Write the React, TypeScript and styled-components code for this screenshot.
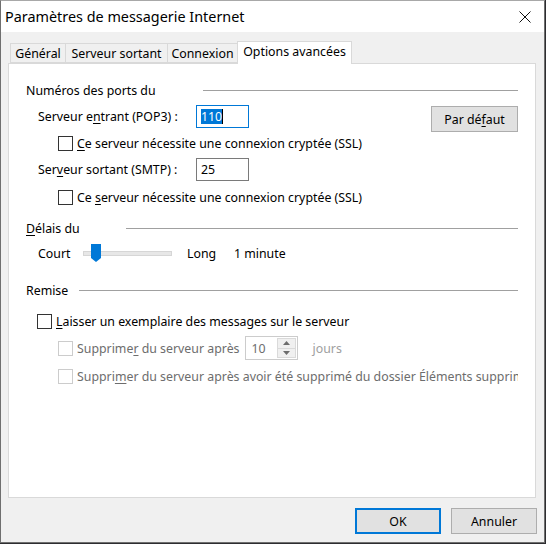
import React from 'react';
import styled, { createGlobalStyle } from 'styled-components';

const GlobalStyle = createGlobalStyle`
  html, body {
    margin: 0;
    padding: 0;
    background: #2d2d30;
  }
  body {
    font-family: 'Noto Sans', 'Liberation Sans', sans-serif;
    font-size: 12.35px;
    color: #000;
  }
  u {
    text-decoration-thickness: 1px;
    text-underline-offset: 2px;
  }
`;

const Window = styled.div`
  width: 545px;
  height: 543px;
  box-sizing: border-box;
  border: 1px solid #6f6f6f;
  border-top-color: #a8a8a8;
  background: #f0f0f0;
  display: flex;
  flex-direction: column;
`;

const TitleBar = styled.div`
  height: 31px;
  flex-shrink: 0;
  background: #fff;
  display: flex;
  align-items: center;
  justify-content: space-between;
  padding: 0 13px 0 4px;
  font-size: 14.4px;
`;

const CloseIcon = styled.svg`
  width: 12px;
  height: 12px;
`;

const Body = styled.div`
  flex: 1;
  display: flex;
  flex-direction: column;
  padding: 0 8px 0 7px;
  min-height: 0;
`;

const TabStrip = styled.div`
  margin-top: 9px;
  height: 22px;
  padding-left: 2px;
  display: flex;
  align-items: flex-end;
  position: relative;
  z-index: 1;
`;

const Tab = styled.div<{ $w: number; $active?: boolean }>`
  width: ${(p) => p.$w}px;
  height: ${(p) => (p.$active ? 23 : 20)}px;
  box-sizing: border-box;
  margin-left: -1px;
  margin-bottom: ${(p) => (p.$active ? -1 : 0)}px;
  border: 1px solid #d9d9d9;
  border-bottom: ${(p) => (p.$active ? 'none' : '1px solid #d9d9d9')};
  background: ${(p) => (p.$active ? '#fff' : '#f0f0f0')};
  display: flex;
  align-items: center;
  justify-content: center;
  padding-bottom: ${(p) => (p.$active ? 3 : 0)}px;
  white-space: nowrap;
  &:first-child {
    margin-left: 0;
  }
`;

const Panel = styled.div`
  flex: 1;
  background: #fff;
  border: 1px solid #d9d9d9;
  padding: 18px 17px 0 17px;
  display: flex;
  flex-direction: column;
  min-height: 0;
  overflow: hidden;
`;

const GroupHeader = styled.div<{ $mt: number; $labelW: number }>`
  margin-top: ${(p) => p.$mt}px;
  height: 16px;
  display: flex;
  align-items: center;
  & > span {
    width: ${(p) => p.$labelW}px;
    flex-shrink: 0;
    white-space: nowrap;
  }
  &::after {
    content: '';
    flex: 1;
    height: 1px;
    background: #a0a0a0;
  }
`;

const Row = styled.div<{ $mt: number; $indent: number; $h?: number }>`
  margin-top: ${(p) => p.$mt}px;
  padding-left: ${(p) => p.$indent}px;
  height: ${(p) => p.$h ?? 16}px;
  display: flex;
  align-items: center;
  white-space: nowrap;
`;

const PortLabel = styled.span`
  width: 158px;
  flex-shrink: 0;
`;

const PortInput = styled.div<{ $focused?: boolean }>`
  width: 53px;
  height: 23px;
  box-sizing: border-box;
  border: 1px solid ${(p) => (p.$focused ? '#0078d7' : '#7a7a7a')};
  padding-left: 4px;
  display: flex;
  align-items: center;
  align-self: flex-start;
`;

const Selected = styled.span`
  background: #0078d7;
  color: #fff;
  line-height: 15px;
`;

const Caret = styled.span`
  width: 1px;
  height: 15px;
  background: #000;
`;

const PushButton = styled.div<{ $default?: boolean; $w: number }>`
  width: ${(p) => p.$w}px;
  height: 26px;
  box-sizing: border-box;
  border: ${(p) => (p.$default ? '2px solid #0078d7' : '1px solid #adadad')};
  background: #e1e1e1;
  display: flex;
  align-items: center;
  justify-content: center;
  flex-shrink: 0;
`;

const DefaultsButton = styled(PushButton)`
  margin-left: auto;
  align-self: flex-start;
  margin-top: 1px;
`;

const Box = styled.span<{ $disabled?: boolean }>`
  width: 15px;
  height: 15px;
  box-sizing: border-box;
  border: 1px solid ${(p) => (p.$disabled ? '#cccccc' : '#333333')};
  background: #fff;
  flex-shrink: 0;
  margin-right: 4px;
`;

const Label = styled.span<{ $disabled?: boolean }>`
  color: ${(p) => (p.$disabled ? '#6d6d6d' : '#000')};
`;

const Clipped = styled(Label)`
  max-width: 443px;
  overflow: hidden;
`;

const SliderLabel = styled.span<{ $w: number }>`
  width: ${(p) => p.$w}px;
  flex-shrink: 0;
`;

const Track = styled.div`
  position: relative;
  width: 89px;
  height: 5px;
  box-sizing: border-box;
  background: #e7e7e7;
  border: 1px solid #d6d6d6;
  margin-right: 15px;
  flex-shrink: 0;
`;

const Thumb = styled.svg`
  position: absolute;
  left: 7px;
  top: -8px;
`;

const Spin = styled.div`
  width: 53px;
  height: 24px;
  box-sizing: border-box;
  border: 1px solid #cccccc;
  margin-left: 5px;
  margin-right: 15px;
  display: flex;
  align-items: center;
  padding-left: 6px;
  color: #6d6d6d;
`;

const SpinButtons = styled.div`
  margin-left: auto;
  margin-right: 1px;
  width: 19px;
  height: 20px;
  display: flex;
  flex-direction: column;
`;

const SpinHalf = styled.div`
  flex: 1;
  box-sizing: border-box;
  border: 1px solid #dadada;
  background: #f0f0f0;
  display: flex;
  align-items: center;
  justify-content: center;
  & + & {
    margin-top: -1px;
  }
`;

const Muted = styled.span`
  color: #a0a0a0;
`;

const Footer = styled.div`
  height: 44px;
  flex-shrink: 0;
  box-sizing: border-box;
  padding: 10px 0 8px;
  margin-right: -1px;
  display: flex;
  justify-content: flex-end;
  align-items: flex-start;
  gap: 10px;
`;

const Arrow = ({ up }: { up?: boolean }) => (
  <svg width="7" height="4" viewBox="0 0 7 4">
    <polygon points={up ? '0,4 7,4 3.5,0' : '0,0 7,0 3.5,4'} fill="#6d6d6d" />
  </svg>
);

const Check = ({ disabled }: { disabled?: boolean }) => <Box $disabled={disabled} />;

export default function App() {
  return (
    <>
      <GlobalStyle />
      <Window>
        <TitleBar>
          <span>Paramètres de messagerie Internet</span>
          <CloseIcon viewBox="0 0 12 12">
            <path d="M0.5 0.5 L11.5 11.5 M11.5 0.5 L0.5 11.5" stroke="#111" strokeWidth="1" />
          </CloseIcon>
        </TitleBar>
        <Body>
          <TabStrip>
            <Tab $w={56}>Général</Tab>
            <Tab $w={103}>Serveur sortant</Tab>
            <Tab $w={71}>Connexion</Tab>
            <Tab $w={115} $active>Options avancées</Tab>
          </TabStrip>
          <Panel>
            <GroupHeader $mt={0} $labelW={177}>
              <span>Numéros des ports du</span>
            </GroupHeader>

            <Row $mt={7} $indent={12} $h={23}>
              <PortLabel>
                Serveur e<u>n</u>trant (POP3) :
              </PortLabel>
              <PortInput $focused>
                <Selected>110</Selected>
                <Caret />
              </PortInput>
              <DefaultsButton $w={87}>
                Par dé<u>f</u>aut
              </DefaultsButton>
            </Row>

            <Row $mt={7} $indent={32}>
              <Check />
              <Label>
                <u>C</u>e serveur nécessite une connexion cryptée (SSL)
              </Label>
            </Row>

            <Row $mt={7} $indent={12} $h={23}>
              <PortLabel>
                Ser<u>v</u>eur sortant (SMTP) :
              </PortLabel>
              <PortInput>25</PortInput>
            </Row>

            <Row $mt={8} $indent={32}>
              <Check />
              <Label>
                Ce <u>s</u>erveur nécessite une connexion cryptée (SSL)
              </Label>
            </Row>

            <GroupHeader $mt={15} $labelW={100}>
              <span>
                <u>D</u>élais du
              </span>
            </GroupHeader>

            <Row $mt={8} $indent={12} $h={18}>
              <SliderLabel $w={45}>Court</SliderLabel>
              <Track>
                <Thumb width="11" height="18" viewBox="0 0 11 18">
                  <path d="M0 0 H10 V14 L5 18 L0 14 Z" fill="#0078d7" />
                </Thumb>
              </Track>
              <SliderLabel $w={47}>Long</SliderLabel>
              <span>1 minute</span>
            </Row>

            <GroupHeader $mt={20} $labelW={53}>
              <span>Remise</span>
            </GroupHeader>

            <Row $mt={15} $indent={11}>
              <Check />
              <Label>
                <u>L</u>aisser un exemplaire des messages sur le serveur
              </Label>
            </Row>

            <Row $mt={7} $indent={32} $h={24}>
              <Check disabled />
              <Label $disabled>
                Supprime<u>r</u> du serveur après
              </Label>
              <Spin>
                10
                <SpinButtons>
                  <SpinHalf>
                    <Arrow up />
                  </SpinHalf>
                  <SpinHalf>
                    <Arrow />
                  </SpinHalf>
                </SpinButtons>
              </Spin>
              <Muted>jours</Muted>
            </Row>

            <Row $mt={8} $indent={32}>
              <Check disabled />
              <Clipped $disabled>
                Suppri<u>m</u>er du serveur après avoir été supprimé du dossier Éléments supprimés
              </Clipped>
            </Row>
          </Panel>
          <Footer>
            <PushButton $default $w={86}>
              OK
            </PushButton>
            <PushButton $w={86}>Annuler</PushButton>
          </Footer>
        </Body>
      </Window>
    </>
  );
}
